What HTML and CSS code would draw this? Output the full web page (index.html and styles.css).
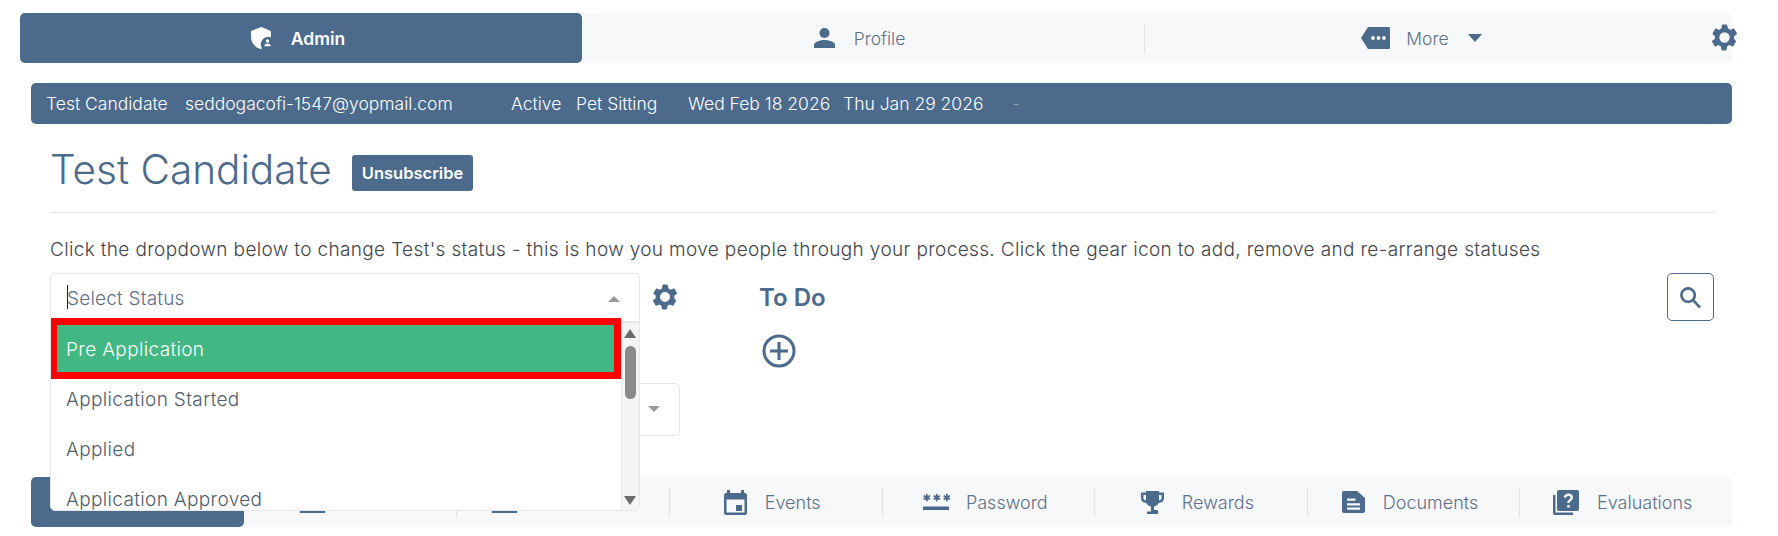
FILE: index.html
```html
<!DOCTYPE html>
<html>
<head>
    <meta charset="UTF-8">
    <title>Test Candidate</title>
    <link rel="stylesheet" href="styles.css">
</head>
<body>
    <nav class="topnav">
        <a class="topnav-tab active">
            <svg class="ico ico-shield" viewBox="0 0 24 22"><path d="M11.500 0 1 4v6c0 5.500 3.500 10 9.500 12 .5-.2 1-.4 1.500-.6A7.500 7.500 0 0 1 21 10.400V4z"/><circle cx="17.500" cy="16" r="5.800"/><circle class="cut-fill" cx="17.500" cy="14" r="1.700"/><path class="cut-fill" d="M14.300 19.200c0-1.800 1.600-2.700 3.200-2.700s3.200.9 3.200 2.700z"/></svg>
            <span>Admin</span>
        </a>
        <a class="topnav-tab">
            <svg class="ico ico-person" viewBox="0 0 21 20"><circle cx="10.500" cy="5" r="5"/><path d="M0 20v-3c0-3.500 7-5 10.500-5s10.500 1.500 10.500 5v3z"/></svg>
            <span>Profile</span>
        </a>
        <a class="topnav-tab sep">
            <svg class="ico ico-more" viewBox="0 0 29 22"><path d="M7 0h20.500A1.500 1.500 0 0 1 29 1.500v19a1.500 1.500 0 0 1-1.500 1.500H7l-7-11z"/><circle class="cut-fill" cx="12" cy="11" r="1.900"/><circle class="cut-fill" cx="17.500" cy="11" r="1.900"/><circle class="cut-fill" cx="23" cy="11" r="1.900"/></svg>
            <span>More</span>
            <i class="caret"></i>
        </a>
        <svg class="ico nav-gear" viewBox="0 0 24 24"><path fill-rule="evenodd" d="M19.400 13c0-.3.100-.7.100-1s0-.7-.1-1l2.100-1.600c.2-.2.200-.4.100-.6l-2-3.500c-.1-.2-.4-.3-.6-.2l-2.500 1c-.5-.4-1.100-.7-1.700-1L14 2.400c0-.2-.2-.4-.5-.4h-3c-.2 0-.4.200-.5.400l-.4 2.700c-.6.200-1.100.6-1.700 1l-2.500-1c-.2-.1-.5 0-.6.200l-2 3.500c-.1.200-.1.400.1.600L4.600 11c0 .3-.1.700-.1 1s0 .7.100 1l-2.100 1.600c-.2.200-.2.400-.1.600l2 3.500c.1.200.4.300.6.200l2.500-1c.5.400 1.100.7 1.700 1l.4 2.700c0 .2.200.4.500.4h3c.2 0 .4-.2.500-.4l.4-2.700c.6-.2 1.100-.6 1.700-1l2.500 1c.2.100.5 0 .6-.2l2-3.500c.1-.2.100-.4-.1-.6zM12 16a4 4 0 1 1 0-8 4 4 0 0 1 0 8z"/></svg>
    </nav>

    <div class="infobar">
        <span class="info-name">Test Candidate</span>
        <span class="info-mail">seddogacofi-1547@yopmail.com</span>
        <span class="info-active">Active</span>
        <span class="info-job">Pet Sitting</span>
        <span class="info-date1">Wed Feb 18 2026</span>
        <span class="info-date2">Thu Jan 29 2026</span>
        <span class="faint">-</span>
    </div>

    <main class="content">
        <div class="title-row">
            <h1>Test Candidate</h1>
            <button class="btn-unsub">Unsubscribe</button>
        </div>
        <p class="hint">Click the dropdown below to change Test's status - this is how you move people through your process. Click the gear icon to add, remove and re-arrange statuses</p>

        <div class="status-row">
            <div class="status-col">
                <div class="status-select">
                    <div class="status-head">
                        <span class="cursor"></span><span class="status-text">Select Status</span>
                        <i class="arrow-up"></i>
                    </div>
                    <div class="status-menu">
                        <ul class="status-list">
                            <li class="picked">Pre Application</li>
                            <li>Application Started</li>
                            <li>Applied</li>
                            <li>Application Approved</li>
                        </ul>
                        <div class="scroll">
                            <i class="scroll-up"></i>
                            <div class="scroll-thumb"></div>
                            <i class="scroll-down"></i>
                        </div>
                    </div>
                </div>
                <div class="second-select"><i class="arrow-down"></i></div>
            </div>
            <svg class="ico status-gear" viewBox="0 0 24 24"><path fill-rule="evenodd" d="M19.400 13c0-.3.100-.7.100-1s0-.7-.1-1l2.100-1.600c.2-.2.200-.4.100-.6l-2-3.500c-.1-.2-.4-.3-.6-.2l-2.500 1c-.5-.4-1.100-.7-1.700-1L14 2.400c0-.2-.2-.4-.5-.4h-3c-.2 0-.4.200-.5.400l-.4 2.700c-.6.200-1.100.6-1.700 1l-2.500-1c-.2-.1-.5 0-.6.200l-2 3.500c-.1.200-.1.400.1.600L4.600 11c0 .3-.1.700-.1 1s0 .7.100 1l-2.100 1.600c-.2.200-.2.400-.1.600l2 3.500c.1.200.4.300.6.200l2.500-1c.5.400 1.100.7 1.700 1l.4 2.700c0 .2.200.4.500.4h3c.2 0 .4-.2.500-.4l.4-2.700c.6-.2 1.100-.6 1.700-1l2.500 1c.2.100.5 0 .6-.2l2-3.500c.1-.2.100-.4-.1-.6zM12 16a4 4 0 1 1 0-8 4 4 0 0 1 0 8z"/></svg>
            <div class="todo">
                <h3>To Do</h3>
                <svg class="plus" viewBox="0 0 34 34"><circle cx="17" cy="17" r="15"/><path d="M17 8v18M8 17h18"/></svg>
            </div>
            <button class="btn-search">
                <svg viewBox="0 0 24 24"><circle cx="9.500" cy="9.500" r="7"/><path d="m14.500 14.500 7.500 8"/></svg>
            </button>
        </div>
    </main>

    <nav class="subnav">
        <a class="subnav-tab active"></a>
        <a class="subnav-tab"><span class="under-bar bar-a"></span></a>
        <a class="subnav-tab sep"><span class="under-bar bar-b"></span></a>
        <a class="subnav-tab sep">
            <svg class="ico ico-cal" viewBox="0 0 23 25"><path d="M3 0h3v3h11V0h3v3h1a2 2 0 0 1 2 2v18a2 2 0 0 1-2 2H2a2 2 0 0 1-2-2V5a2 2 0 0 1 2-2h1zM2.500 9.500v13h18v-13z"/><path d="M12 15h6v6h-6z"/></svg>
            <span>Events</span>
        </a>
        <a class="subnav-tab sep">
            <svg class="ico ico-pass" viewBox="0 0 28 16"><path d="M4 0h1.600l.2 2 1.800-.9.800 1.400-1.700 1.100 1.700 1.100-.8 1.400-1.800-.9-.2 2H4l-.2-2-1.800.9-.8-1.400 1.700-1.100L1.200 2.500 2 1.100l1.800.9zM14 0h1.600l.2 2 1.800-.9.800 1.400-1.700 1.100 1.700 1.100-.8 1.400-1.800-.9-.2 2H14l-.2-2-1.800.9-.8-1.400 1.700-1.100-1.700-1.100.8-1.400 1.800.9zM24 0h1.600l.2 2 1.800-.9.800 1.400-1.700 1.100 1.700 1.100-.8 1.400-1.800-.9-.2 2H24l-.2-2-1.800.9-.8-1.400 1.700-1.100-1.700-1.100.8-1.400 1.800.9z"/><path d="M1 12.500h26V16H1z"/></svg>
            <span>Password</span>
        </a>
        <a class="subnav-tab sep">
            <svg class="ico ico-cup" viewBox="0 0 23 23"><path fill-rule="evenodd" d="M5 0h13v1.500h5V7c0 2.800-2 4.600-5.200 5a6.500 6.500 0 0 1-4.800 3.700V19h4v4H6v-2.500h4V15.700A6.500 6.500 0 0 1 5.200 12C2 11.600 0 9.800 0 7V1.500h5zM2.500 4v3c0 1.300.9 2.200 2.500 2.500V4zm18 0H18v5.500c1.600-.3 2.500-1.200 2.500-2.500z"/></svg>
            <span>Rewards</span>
        </a>
        <a class="subnav-tab sep">
            <svg class="ico ico-doc" viewBox="0 0 23 22"><path fill-rule="evenodd" d="M2 0h13l8 7v13a2 2 0 0 1-2 2H2a2 2 0 0 1-2-2V2a2 2 0 0 1 2-2zm3 7.500v2.200h8.500V7.500zm0 4.700v2.200h13v-2.200zm0 4.300v2.200h13v-2.200z"/></svg>
            <span>Documents</span>
        </a>
        <a class="subnav-tab sep">
            <svg class="ico ico-eval" viewBox="0 0 26 25"><path d="M0 5h2.500v17.500H20V25H2a2 2 0 0 1-2-2z"/><path fill-rule="evenodd" d="M6 0h18a2 2 0 0 1 2 2v17a2 2 0 0 1-2 2H6a2 2 0 0 1-2-2V2a2 2 0 0 1 2-2zm8.200 15v2.500h2.500V15zm0-2h2.500c0-2 3.300-2.600 3.300-5.700C20 4.900 18 3.500 15.500 3.500S11 5 10.700 7.500l2.500.3c.2-1.200 1-1.900 2.300-1.900s2 .6 2 1.600c0 1.800-3.300 2.200-3.300 5.500z"/></svg>
            <span>Evaluations</span>
        </a>
    </nav>
</body>
</html>
```
FILE: styles.css
```css
* {
    box-sizing: border-box;
}
body {
    margin: 0;
    height: 536px;
    overflow: hidden;
    background: white;
    color: #3f4a56;
    font-family: Inter, 'Open Sans', sans-serif;
    font-weight: 300;
}
.ico {
    fill: #4b6a8c;
    flex: none;
}
.topnav {
    display: flex;
    position: relative;
    margin: 13px 46px 0 20px;
    height: 50px;
    padding-right: 26px;
    background: #f7f8fa;
    border-radius: 5px;
}
.topnav-tab {
    flex: 1;
    display: flex;
    align-items: center;
    justify-content: center;
    gap: 19px;
    padding-right: 7px;
    color: #5d7088;
    font-size: 17.500px;
    position: relative;
}
.topnav-tab.active {
    background: #4b6a8c;
    color: white;
    font-weight: 600;
    border-radius: 5px;
    gap: 17px;
}
.topnav-tab.active .ico {
    fill: white;
}
.ico-shield {
    width: 24px;
    height: 22px;
}
.topnav-tab.active .cut-fill {
    fill: white;
}
.ico-person {
    width: 21px;
    height: 20px;
}
.ico-more {
    width: 29px;
    height: 22px;
    margin-right: -3px;
}
.cut-fill {
    fill: #f7f8fa;
}
.topnav-tab.active .ico-shield circle:nth-child(2) {
    fill: #4b6a8c;
}
.topnav-tab.sep::before, .subnav-tab.sep::before {
    content: '';
    position: absolute;
    left: 0;
    top: 10px;
    bottom: 10px;
    border-left: 1px solid #e0e3e7;
}
.caret {
    border-left: 7px solid transparent;
    border-right: 7px solid transparent;
    border-top: 8px solid #4b6a8c;
}
.nav-gear {
    position: absolute;
    right: -8px;
    top: 9px;
    width: 31px;
    height: 31px;
}
.infobar {
    display: flex;
    align-items: center;
    margin: 20px 46px 0 31px;
    height: 41px;
    padding: 0 15px;
    background: #4b6a8c;
    border-radius: 5px;
    color: white;
    font-size: 17.500px;
    white-space: nowrap;
}
.info-name {
    width: 139px;
}
.info-mail {
    width: 326px;
}
.info-active {
    width: 65px;
}
.info-job {
    width: 112px;
}
.info-date1 {
    width: 155px;
}
.info-date2 {
    width: 169px;
}
.faint {
    opacity: .3;
}
.content {
    margin: 0 64px 0 50px;
    height: 353px;
}
.title-row {
    display: flex;
    align-items: flex-start;
    gap: 22px;
    padding: 21px 0 0;
    border-bottom: 1px solid #e5e7e9;
    height: 89px;
}
h1 {
    margin: 0;
    width: 280px;
    font-size: 40.500px;
    line-height: 50px;
    font-weight: 300;
    white-space: nowrap;
    color: #4b6a8c;
}
.btn-unsub {
    margin-top: 10px;
    width: 121px;
    height: 36px;
    padding: 0;
    border: 0;
    border-radius: 3px;
    background: #4b6a8c;
    color: white;
    font-family: inherit;
    font-size: 16.500px;
    font-weight: 600;
}
.hint {
    margin: 25px 0 0;
    font-size: 19px;
    letter-spacing: .35px;
    line-height: 24px;
    white-space: nowrap;
    color: #3f444a;
}
.status-row {
    display: flex;
    align-items: flex-start;
    margin-top: 11px;
}
.status-col {
    width: 590px;
    position: relative;
}
.status-select {
    position: relative;
    z-index: 2;
    height: 49px;
    border: 1px solid #e5e7e9;
    border-radius: 5px 5px 0 0;
    background: white;
}
.status-head {
    display: flex;
    align-items: center;
    height: 45px;
    padding-left: 16px;
    font-size: 19px;
    letter-spacing: .2px;
    color: #5d7088;
}
.status-text {
    margin-left: -1px;
    padding-top: 3px;
}
.cursor {
    width: 1px;
    height: 24px;
    background: #222;
}
.arrow-up {
    position: absolute;
    right: 19px;
    top: 22px;
    border-left: 6px solid transparent;
    border-right: 6px solid transparent;
    border-bottom: 6px solid #999;
}
.status-menu {
    position: absolute;
    left: -1px;
    top: 48px;
    width: 590px;
    height: 189px;
    display: flex;
    background: white;
    border: 1px solid #e5e7e9;
    border-radius: 0 0 5px 5px;
}
.status-list {
    flex: 1;
    margin: -5px 0 0;
    padding: 0;
    list-style: none;
    font-size: 19px;
    letter-spacing: .35px;
    color: #4f5d6b;
    height: 192px;
    overflow: hidden;
    white-space: nowrap;
}
.status-list li {
    height: 50px;
    line-height: 54px;
    padding-left: 15px;
}
.status-list .picked {
    height: 61px;
    line-height: 49px;
    margin: 0 0 -6px -1px;
    width: 571px;
    padding-left: 9px;
    position: relative;
    border: 7px solid #ff0000;
    background: #41b883;
    color: white;
}
.scroll {
    width: 18px;
    position: relative;
    background: #f5f5f5;
    border-left: 1px solid #eee;
}
.scroll-up, .scroll-down {
    position: absolute;
    left: 2px;
    border-left: 6.500px solid transparent;
    border-right: 6.500px solid transparent;
}
.scroll-up {
    top: 6px;
    border-bottom: 9px solid #6b6b6b;
}
.scroll-down {
    bottom: 5px;
    border-top: 9px solid #6b6b6b;
}
.scroll-thumb {
    position: absolute;
    left: 3px;
    top: 23px;
    width: 11px;
    height: 53px;
    border-radius: 6px;
    background: #8a8a8a;
}
.second-select {
    position: absolute;
    left: 400px;
    top: 110px;
    width: 230px;
    height: 53px;
    border: 1px solid #e5e7e9;
    border-radius: 5px;
}
.arrow-down {
    position: absolute;
    right: 19px;
    top: 22px;
    border-left: 6px solid transparent;
    border-right: 6px solid transparent;
    border-top: 6px solid #999;
}
.status-gear {
    width: 30px;
    height: 30px;
    margin: 9px 0 0 10px;
}
.todo {
    margin-left: 79px;
    flex: 1;
}
h3 {
    margin: 10px 0 0;
    font-size: 24px;
    line-height: 30px;
    font-weight: 600;
    color: #4b6a8c;
}
.plus {
    display: block;
    width: 34px;
    height: 34px;
    margin: 21px 0 0 3px;
    fill: none;
    stroke: #4b6a8c;
    stroke-width: 3;
}
.btn-search {
    width: 47px;
    height: 48px;
    padding: 0;
    display: flex;
    align-items: center;
    justify-content: center;
    background: white;
    border: 1px solid #4b6a8c;
    border-radius: 5px;
}
.btn-search svg {
    width: 23px;
    height: 23px;
    fill: none;
    stroke: #4b6a8c;
    stroke-width: 2.800;
}
.subnav {
    margin: 0 46px 0 31px;
    height: 50px;
    display: grid;
    grid-template-columns: repeat(8, 1fr);
    background: #f7f8fa;
    border-radius: 5px;
}
.subnav-tab {
    display: flex;
    align-items: center;
    justify-content: center;
    gap: 18px;
    padding-right: 6px;
    position: relative;
    font-size: 18px;
    color: #5d7088;
}
.subnav-tab.active {
    background: #4b6a8c;
    border-radius: 5px;
}
.under-bar {
    align-self: flex-end;
    margin-bottom: 14px;
    width: 25px;
    height: 3px;
    background: #4b6a8c;
}
.bar-a {
    margin-right: 68px;
}
.bar-b {
    margin-right: 110px;
}
.ico-cal {
    width: 23px;
    height: 25px;
}
.ico-pass {
    width: 28px;
    height: 16px;
    margin-right: -2px;
}
.ico-cup {
    width: 23px;
    height: 23px;
}
.ico-doc {
    width: 23px;
    height: 22px;
}
.ico-eval {
    width: 26px;
    height: 25px;
}
```
